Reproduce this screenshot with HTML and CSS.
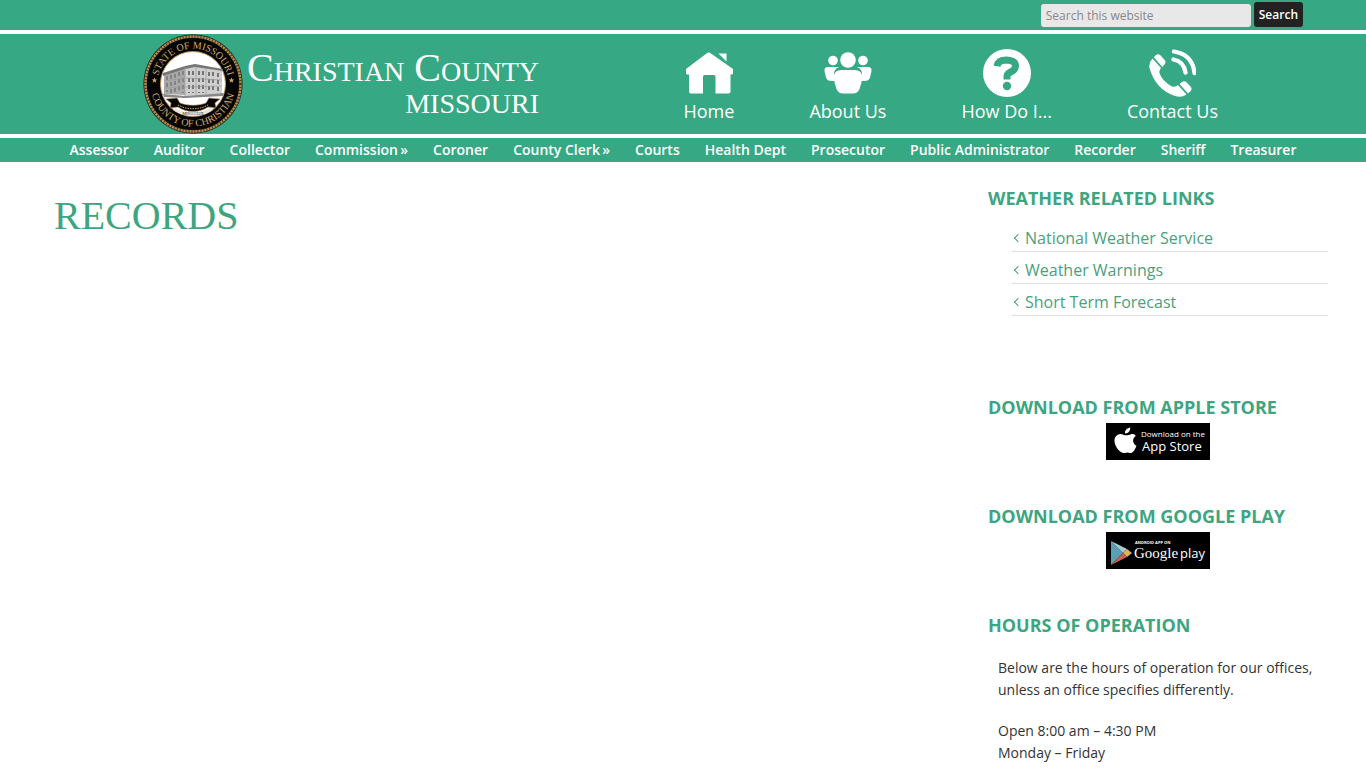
FILE: index.html
```html
<!DOCTYPE html>
<html lang="en">
<head>
    <meta charset="UTF-8">
    <meta name="viewport" content="width=device-width, initial-scale=1.0">
    <title>Records - Christian County, Missouri</title>
    <link rel="stylesheet" href="styles.css">
</head>
<body>
    <div class="top-bar">
        <form class="search-form" role="search">
            <input type="search" name="s" placeholder="Search this website" aria-label="Search this website">
            <button type="submit">Search</button>
        </form>
    </div>

    <header class="site-header">
        <div class="wrap">
            <a class="logo" href="#">
                <svg class="seal" viewBox="0 0 100 100" role="img" aria-label="County seal">
                    <defs>
                        <path id="arc-top" d="M14.500 50a35.500 35.500 0 0 1 71 0"/>
                        <path id="arc-bottom" d="M7.500 50a42.500 42.500 0 0 0 85 0"/>
                    </defs>
                    <circle cx="50" cy="50" r="49.500" fill="#15100a"/>
                    <circle cx="50" cy="50" r="47.500" fill="none" stroke="#b48e56" stroke-width="2.500"/>
                    <circle cx="50" cy="50" r="47.500" fill="none" stroke="#4a3517" stroke-width="2.500" stroke-dasharray="1 2"/>
                    <circle cx="50" cy="50" r="45.500" fill="#060505"/>
                    <circle cx="50" cy="50" r="32.500" fill="#fff" stroke="#b48e56"/>
                    <text class="seal-text"><textPath href="#arc-top" startOffset="50%" text-anchor="middle">STATE OF MISSOURI</textPath></text>
                    <text class="seal-text"><textPath href="#arc-bottom" startOffset="50%" text-anchor="middle">COUNTY OF CHRISTIAN</textPath></text>
                    <path d="M11.500 43.500l.8 2h2l-1.600 1.200.6 2-1.800-1.200-1.800 1.200.6-2-1.600-1.200h2zM88.500 43.500l.8 2h2l-1.600 1.200.6 2-1.800-1.200-1.800 1.200.6-2-1.600-1.200h2z" fill="#d0ab6e"/>
                    <!-- courthouse -->
                    <path d="M21 40l21-7v28l-21-1z" fill="#a9a9a9"/>
                    <path d="M42 33l10-2 27 5v23l-37 3z" fill="#cfcfcf"/>
                    <path d="M20 39l22-7 10-2 28 5v2l-28-4-10 2-22 7z" fill="#777"/>
                    <path d="M24 42v16M28 41v18M32 40v19M36 38v21M40 37v22" stroke="#5f5f5f" stroke-dasharray="4 3"/>
                    <path d="M46 37v22M50 37v22M56 37v22M60 37v22M66 38v20M70 38v20M75 39v18" stroke="#747474" stroke-width="2" stroke-dasharray="4 3"/>
                    <path d="M42 33v29M53 32v29M63 34v26M21 47l21-3 37 2M21 54l21-1 37-1" stroke="#999" fill="none" stroke-width=".7"/>
                    <path d="M20 60l22 2 38-3v3l-38 2-21-1z" fill="#888"/>
                    <!-- ribbon -->
                    <path d="M23 65l11-1 3 5c8 3 18 3 26 0l3-5 11 1-5 4 1 5-8-1c-9 6-21 6-30 0l-8 1 1-5z" fill="#080706" stroke="#b48e56" stroke-width=".6"/>
                    <path d="M35 71c9 5 21 5 30 0" stroke="#d0ab6e" stroke-dasharray="1.500 1" fill="none"/>
                    <path d="M32 74c11 6 25 6 36 0l2 2c-13 8-27 8-40 0z" fill="#e8e4da"/>
                    <text class="seal-year" x="50" y="81" text-anchor="middle">MDCCCLIX</text>
                </svg>
                <span class="logo-text">
                    <span class="logo-county">Christian County</span>
                    <span class="logo-state">MISSOURI</span>
                </span>
            </a>

            <nav class="main-nav" aria-label="Main">
                <a href="#">
                    <svg viewBox="0 0 48 48" fill="currentColor" aria-hidden="true">
                        <path d="M1 20L22.500 3.800q1.200-.8 2.400 0L48 20v4.300q0 1.200-1.500 1.200H45.500v17q0 2-2 2H30.500V27.500q0-1.500-1.500-1.500H19.500q-1.500 0-1.500 1.500v17H6q-2 0-2-2v-17H2.500Q1 25.500 1 24zM33.500 4.500H41.500v8z"/>
                    </svg>
                    <span>Home</span>
                </a>
                <a href="#">
                    <svg viewBox="0 0 48 48" fill="currentColor" aria-hidden="true">
                        <circle cx="24" cy="11" r="7.800"/>
                        <circle cx="9" cy="11.500" r="4.800"/>
                        <circle cx="39" cy="11.500" r="4.800"/>
                        <path d="M.5 22q-.5-4 3.500-4h11.500q-4.500 1-5.500 6l.8 8H8q-5 0-6-3.500zM47.500 22q.5-4-3.500-4H32.500q4.500 1 5.500 6l-.8 8H40q5 0 6-3.500z"/>
                        <path d="M17.500 21h13q7.500 0 7.500 6.500 0 7-2.500 12.500-2 4.500-6.500 4.500h-10q-4.500 0-6.500-4.500-2.500-5.500-2.500-12.500 0-6.500 7.500-6.500z"/>
                    </svg>
                    <span>About Us</span>
                </a>
                <a href="#">
                    <svg viewBox="0 0 48 48" fill="currentColor" aria-hidden="true">
                        <circle cx="24" cy="24" r="24"/>
                        <path class="icon-cut" d="M14 17.200q1-6.200 9.500-6.200 9 .3 9 6 0 3.700-4.800 6-3.700 1.800-3.700 4.500v3"/>
                        <circle class="icon-dot" cx="24" cy="37" r="4.200"/>
                    </svg>
                    <span>How Do I...</span>
                </a>
                <a href="#">
                    <svg viewBox="-1 0 48 48" fill="currentColor" aria-hidden="true">
                        <path d="M3.500 9.500L12 19q-2 2-1.500 5 2.500 8 12.500 13.500 3.500 1 6-1.500l8.500 9.500q-5 3.500-11.500 1.500Q6.500 40.500.5 19q-1-5.500 3-9.500z"/>
                        <path d="M4.800 8.300l2.400-2.500q2-1.500 4.200.5l4.300 4.800q1.800 2.300-.2 4.500l-2.200 2.300zM30.500 35l2.500-2q2.300-1.700 4.500.3l4 4.200q2 2.300.2 4.500l-2.700 2.500z"/>
                        <path d="M24.500 10.500q10.500 2 12 13M25 2.500q18.500 3 20.500 21.500" fill="none" stroke="currentColor" stroke-width="4.300" stroke-linecap="round"/>
                    </svg>
                    <span>Contact Us</span>
                </a>
            </nav>
        </div>
    </header>

    <nav class="office-nav" aria-label="Offices">
        <a href="#">Assessor</a>
        <a href="#">Auditor</a>
        <a href="#">Collector</a>
        <a href="#">Commission&thinsp;»</a>
        <a href="#">Coroner</a>
        <a href="#">County Clerk&thinsp;»</a>
        <a href="#">Courts</a>
        <a href="#">Health Dept</a>
        <a href="#">Prosecutor</a>
        <a href="#">Public Administrator</a>
        <a href="#">Recorder</a>
        <a href="#">Sheriff</a>
        <a href="#">Treasurer</a>
    </nav>

    <div class="site-inner">
        <main>
            <h1>Records</h1>
        </main>

        <aside class="sidebar">
            <section class="widget widget-links">
                <h2>Weather Related Links</h2>
                <ul>
                    <li><a href="#">National Weather Service</a></li>
                    <li><a href="#">Weather Warnings</a></li>
                    <li><a href="#">Short Term Forecast</a></li>
                </ul>
            </section>

            <section class="widget">
                <h2>Download from Apple Store</h2>
                <a class="badge" href="#">
                    <svg viewBox="0 0 104 37" role="img" aria-label="Download on the App Store">
                        <rect width="104" height="37"/>
                        <path fill="#fff" d="M24.500 11.500c2-.9 4-.4 5.300 1.500-4 2.500-3.300 8 .7 9.700-1.500 4.300-4 7.800-6.500 7.300-1.700-.8-3.200-.8-5 0C14.500 31 9 24 8.500 18.500c-.3-6 4.800-9 9.300-6.600 1.500.6 2.200.7 6.700-.4zM19 10.500c-.2-3 2-5.700 5.300-6 .2 3.300-2 5.800-5.300 6z"/>
                        <text class="apple-small" x="35" y="14">Download on the</text>
                        <text class="apple-large" x="36" y="28">App Store</text>
                    </svg>
                </a>
            </section>

            <section class="widget">
                <h2>Download from Google Play</h2>
                <a class="badge" href="#">
                    <svg viewBox="0 0 104 37" role="img" aria-label="Android app on Google play">
                        <rect width="104" height="37"/>
                        <path fill="#5a9fb5" d="M5 9v24l12-12z"/>
                        <path fill="#a5ccd0" d="M5 9l16 8-4 4z"/>
                        <path fill="#d9b45e" d="M21 17l5 4-5 4-4-4z"/>
                        <path fill="#c95f4e" d="M5 33l12-12 4 4z"/>
                        <text class="play-small" x="29" y="12">ANDROID APP ON</text>
                        <text class="play-large" x="28" y="26">Google</text>
                        <text class="play-word" x="74" y="26">play</text>
                    </svg>
                </a>
            </section>

            <section class="widget widget-hours">
                <h2>Hours of Operation</h2>
                <p>Below are the hours of operation for our offices, unless an office specifies differently.</p>
                <p>Open 8:00 am – 4:30 PM<br>Monday – Friday</p>
            </section>
        </aside>
    </div>
</body>
</html>
```
FILE: styles.css
```css
* {
    box-sizing: border-box;
}
body {
    margin: 0;
    font-family: "Open Sans", sans-serif;
    font-size: 14px;
    color: #333;
    background: #fff;
}
a {
    color: #4a9f80;
    text-decoration: none;
}

/* Top bar */
.top-bar {
    height: 30px;
    padding: 2px 63px 0 0;
    background: #36a883;
}
.search-form {
    display: flex;
    justify-content: flex-end;
    align-items: flex-end;
    gap: 3px;
}
.search-form input {
    width: 210px;
    height: 23px;
    padding: 0 5px;
    border: 0;
    border-radius: 3px;
    background: #e8e8e8;
    font: 12px "Open Sans", sans-serif;
    color: #333;
    appearance: none;
}
.search-form input::placeholder {
    color: #888;
}
.search-form button {
    height: 25px;
    padding: 0 5px;
    border: 0;
    border-radius: 3px;
    background: #222;
    color: #fff;
    font: 600 12px "Open Sans", sans-serif;
    cursor: pointer;
}

/* Header */
.site-header {
    margin: 4px 0;
    background: #36a883;
}
.site-header .wrap {
    display: flex;
    justify-content: space-between;
    max-width: 1080px;
    min-height: 100px;
    margin: 0 auto;
    padding-right: 5px;
}
.logo {
    display: flex;
    gap: 4px;
    color: #fff;
    font-family: "Liberation Serif", serif;
}
.seal {
    width: 100px;
    height: 100px;
}
.seal-text {
    font: 10px "Liberation Serif", serif;
    fill: #d0ab6e;
}
.seal-year {
    font: 4px "Liberation Serif", serif;
    fill: #333;
}
.logo-text {
    display: flex;
    flex-direction: column;
    align-items: flex-end;
    padding-top: 12px;
}
.logo-county {
    font-size: 40px;
    line-height: 44px;
    font-variant: small-caps;
}
.logo-state {
    font-size: 28px;
    line-height: 28px;
}
.main-nav {
    display: flex;
    gap: 75px;
    padding-top: 15px;
}
.main-nav a {
    display: flex;
    flex-direction: column;
    align-items: center;
    color: #fff;
    font-size: 18px;
    line-height: 28px;
}
.main-nav svg {
    width: 48px;
    height: 48px;
}
.icon-cut {
    fill: none;
    stroke: #36a883;
    stroke-width: 7;
}
.icon-dot {
    fill: #36a883;
}

/* Offices menu */
.office-nav {
    display: flex;
    flex-wrap: wrap;
    justify-content: center;
    gap: 0 25px;
    background: #36a883;
}
.office-nav a {
    color: #fff;
    font-size: 14px;
    font-weight: 600;
    line-height: 24px;
}

/* Content */
.site-inner {
    display: grid;
    grid-template-columns: minmax(0, 1fr) 340px;
    padding: 24px 38px 0 54px;
}
h1 {
    margin: 8px 0 0;
    color: #3da581;
    font-family: Georgia, "Liberation Serif", serif;
    font-size: 40px;
    font-weight: 400;
    line-height: 44px;
    text-transform: uppercase;
}

/* Sidebar */
.widget {
    margin-bottom: 44px;
}
.widget h2 {
    margin: 0;
    color: #3da581;
    font-size: 18px;
    font-weight: 700;
    line-height: 25px;
    text-transform: uppercase;
}
.widget-links {
    margin-bottom: 79px;
}
.widget-links ul {
    margin: 9px 0 0;
    padding: 0 0 0 24px;
    list-style: none;
}
.widget-links li {
    padding-top: 5px;
    border-bottom: 1px solid #ddd;
    font-size: 16px;
    line-height: 26px;
}
.widget-links a {
    display: flex;
    align-items: center;
    gap: 4px;
    padding-left: 3px;
}
.widget-links a::before {
    content: "";
    width: 5px;
    height: 5px;
    border: solid #4a9f80;
    border-width: 0 0 1px 1px;
    transform: rotate(45deg);
}
.badge {
    display: block;
    width: 104px;
    margin: 3px auto 0;
}
.badge svg {
    display: block;
    width: 100%;
}
.badge text {
    fill: #fff;
}
.apple-small {
    font: 8px "Open Sans", sans-serif;
}
.apple-large {
    font: 13px "Open Sans", sans-serif;
}
.play-small {
    font: bold 4px "Open Sans", sans-serif;
}
.play-large {
    font: 15px "Liberation Serif", serif;
}
.play-word {
    font: 13px "Open Sans", sans-serif;
}
.widget-hours {
    margin-bottom: 0;
}
.widget-hours p {
    margin: 19px 0 0;
    padding-left: 10px;
    line-height: 22px;
}
```
